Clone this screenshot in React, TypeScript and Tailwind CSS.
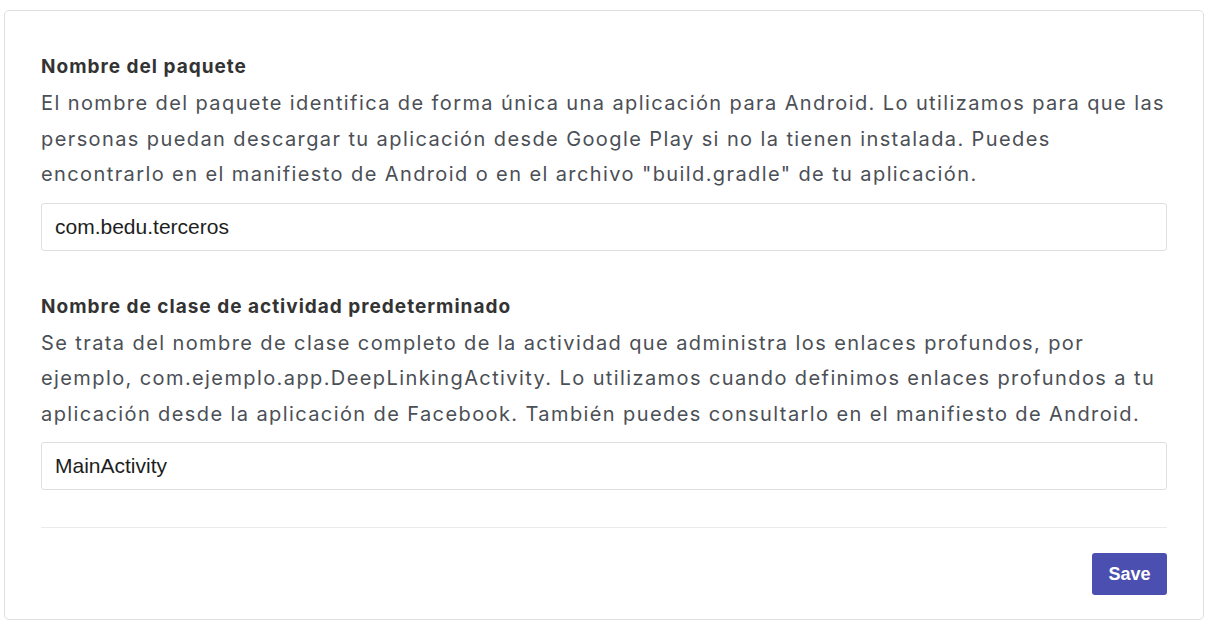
import React from "react";

const font = { fontFamily: "Inter, 'Noto Sans', sans-serif" };

interface FieldProps {
  label: string;
  help: string;
  value: string;
}

const Field: React.FC<FieldProps> = ({ label, help, value }) => {
  return (
    <div className="flex flex-col">
      <h3 className="text-[19px] leading-[24px] font-bold text-[#333] tracking-[1px]">
        {label}
      </h3>
      <p className="mt-[7px] text-[20px] leading-[35.5px] text-[#4b4f56] tracking-[1.4px]">
        {help}
      </p>
      <input
        className="mt-[10px] h-[48px] w-full rounded-[3px] border border-solid border-[#dddfe2] px-[13px] text-[21px] text-[#1c1e21] outline-none"
        style={{ fontFamily: "'Liberation Sans', Arial, sans-serif" }}
        defaultValue={value}
      />
    </div>
  );
};

export default function App() {
  return (
    <div className="min-h-screen bg-white pl-[4px] pt-[10px]" style={font}>
      <div className="w-[1200px] h-[610px] rounded-[5px] border border-solid border-[#dddfe2] bg-white px-[36px] pt-[44px] pb-[24px] flex flex-col">
        <Field
          label="Nombre del paquete"
          help={'El nombre del paquete identifica de forma única una aplicación para Android. Lo utilizamos para que las personas puedan descargar tu aplicación desde Google Play si no la tienen instalada. Puedes encontrarlo en el manifiesto de Android o en el archivo "build.gradle" de tu aplicación.'}
          value="com.bedu.terceros"
        />
        <div className="mt-[44px]">
          <Field
            label="Nombre de clase de actividad predeterminado"
            help="Se trata del nombre de clase completo de la actividad que administra los enlaces profundos, por ejemplo, com.ejemplo.app.DeepLinkingActivity. Lo utilizamos cuando definimos enlaces profundos a tu aplicación desde la aplicación de Facebook. También puedes consultarlo en el manifiesto de Android."
            value="MainActivity"
          />
        </div>
        <div className="mt-auto border-t border-solid border-[#e9eaed] pt-[25px] flex justify-end">
          <button
            className="h-[42px] w-[75px] rounded-[3px] bg-[#4b4fb0] text-[18px] font-bold text-white"
            style={{ fontFamily: "'Liberation Sans', Arial, sans-serif" }}
          >
            Save
          </button>
        </div>
      </div>
    </div>
  );
}
